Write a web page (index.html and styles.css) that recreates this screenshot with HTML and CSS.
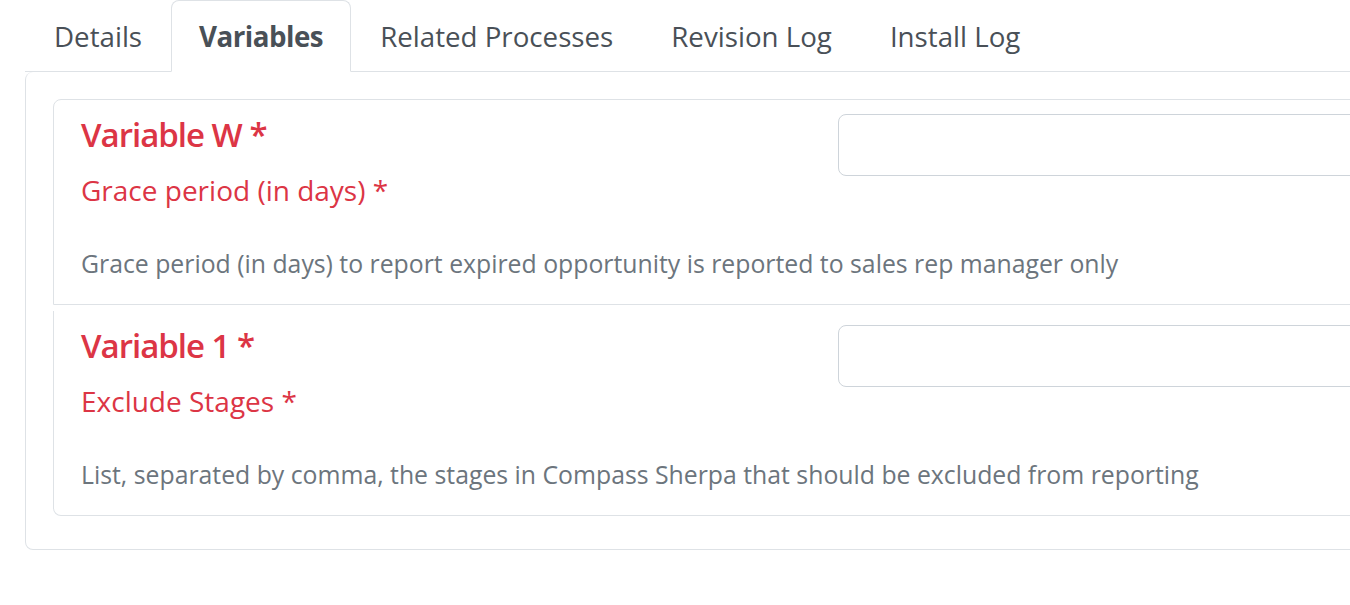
FILE: index.html
```html
<!DOCTYPE html>
<html lang="en">
<head>
<meta charset="utf-8">
<title>Variables</title>
<link rel="stylesheet" href="styles.css">
</head>
<body>
<div class="page">
  <ul class="tabs">
    <li class="tab">Details</li>
    <li class="tab active">Variables</li>
    <li class="tab">Related Processes</li>
    <li class="tab">Revision Log</li>
    <li class="tab">Install Log</li>
  </ul>
  <div class="tab-content">
    <div class="var-list">
      <div class="var-item first">
        <div class="var-row">
          <div class="var-head">
            <h4 class="var-title">Variable W *</h4>
            <div class="var-label">Grace period (in days) *</div>
          </div>
          <div class="var-input-col">
            <input class="var-input" type="text">
          </div>
        </div>
        <div class="var-desc">Grace period (in days) to report expired opportunity is reported to sales rep manager only</div>
      </div>
      <div class="var-item last">
        <div class="var-row">
          <div class="var-head">
            <h4 class="var-title">Variable 1 *</h4>
            <div class="var-label">Exclude Stages *</div>
          </div>
          <div class="var-input-col">
            <input class="var-input" type="text">
          </div>
        </div>
        <div class="var-desc">List, separated by comma, the stages in Compass Sherpa that should be excluded from reporting</div>
      </div>
    </div>
  </div>
</div>
</body>
</html>
```
FILE: styles.css
```css
html, body {
  margin: 0;
  padding: 0;
  overflow: hidden;
  background: #fff;
}
body {
  font-family: "Open Sans", "Noto Sans", sans-serif;
  color: #212529;
}
.page {
  padding: 0 0 0 25px;
  width: 1620px;
}
.tabs {
  list-style: none;
  margin: 0;
  padding: 0;
  display: flex;
  border-bottom: 1px solid #dee2e6;
}
.tab {
  margin-bottom: -1px;
  padding: 17px 28px;
  border: 1px solid transparent;
  border-top-left-radius: 8px;
  border-top-right-radius: 8px;
  font-size: 27.7px;
  line-height: 36px;
  color: #495057;
}
.tab.active {
  font-weight: 700;
  letter-spacing: -0.5px;
  padding: 17px 27px;
  background: #fff;
  border-color: #dee2e6 #dee2e6 #fff;
}
.tab-content {
  border: 1px solid #dee2e6;
  border-top: 0;
  border-radius: 8px;
  padding: 27px 27px 33px 27px;
}
.var-item {
  border: 1px solid #dee2e6;
  padding: 14px 27px 23px 27px;
}
.var-item.first {
  border-radius: 8px 8px 0 0;
}
.var-item.last {
  margin-top: 6px;
  border-top: 0;
  border-radius: 0 0 8px 8px;
}
.var-row {
  display: flex;
}
.var-head {
  width: 757px;
  flex: none;
}
.var-title {
  margin: 0;
  font-size: 33px;
  line-height: 42px;
  font-weight: 600;
  letter-spacing: -1px;
  color: #dc3545;
}
.var-label {
  margin-top: 16px;
  font-size: 28px;
  line-height: 36px;
  color: #dc3545;
}
.var-input-col {
  flex: 1;
}
.var-input {
  display: block;
  box-sizing: border-box;
  width: 100%;
  height: 62px;
  margin: 0;
  border: 1px solid #ced4da;
  border-radius: 8px;
  background: #fff;
}
.var-desc {
  margin-top: 37px;
  font-size: 24.8px;
  line-height: 36px;
  color: #6c757d;
}
```
